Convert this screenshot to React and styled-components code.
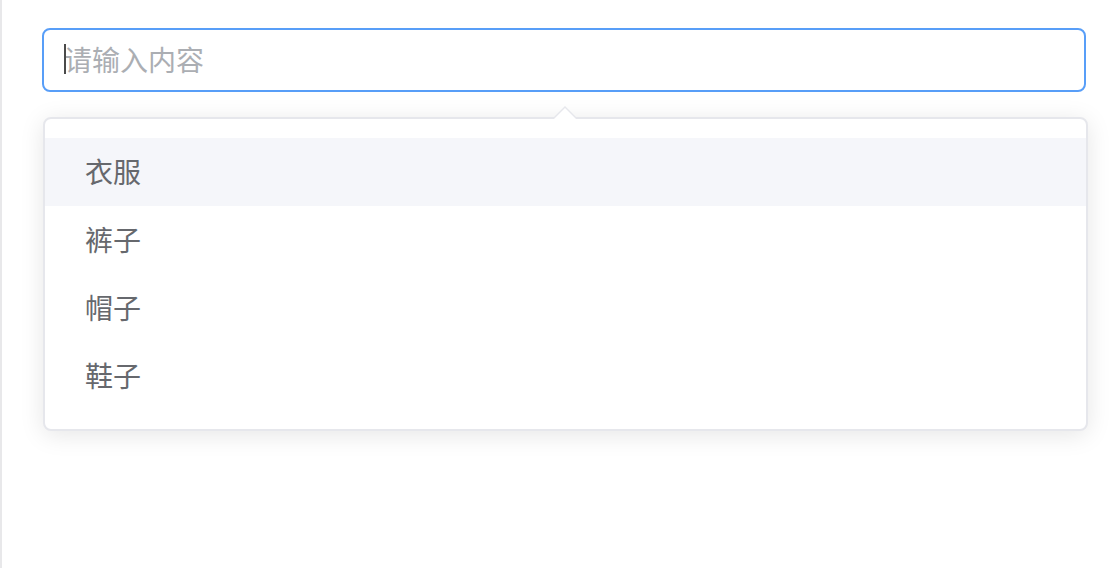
import React from "react";
import styled, { createGlobalStyle } from "styled-components";

const GlobalStyle = createGlobalStyle`
  html, body {
    margin: 0;
    padding: 0;
    background: #ffffff;
  }
  body {
    font-family: "Noto Sans CJK SC", "Noto Sans", sans-serif;
  }
`;

const Page = styled.div`
  box-sizing: border-box;
  height: 568px;
  border-left: 2px solid #e8e8ea;
  padding: 28px 20px 0 40px;
`;

const InputWrap = styled.div`
  position: relative;
  width: 1044px;
`;

const TextInput = styled.input`
  box-sizing: border-box;
  width: 100%;
  height: 64px;
  padding: 0 20px 3px;
  border: 2px solid #589ef8;
  border-radius: 8px;
  outline: none;
  background: #ffffff;
  font-family: "Noto Sans CJK SC", "Noto Sans", sans-serif;
  font-size: 28px;
  color: #606266;
  caret-color: transparent;

  &::placeholder {
    color: #abaeb3;
  }
`;

const Caret = styled.span`
  position: absolute;
  left: 22px;
  top: 16px;
  width: 2px;
  height: 30px;
  background: #4a4a4a;
`;

const Dropdown = styled.div`
  position: relative;
  box-sizing: border-box;
  width: 1045px;
  margin: 25px 0 0 1px;
  padding: 19px 0;
  border: 2px solid #e6e7ec;
  border-radius: 8px;
  background: #ffffff;
  box-shadow: 0 4px 24px rgba(0, 0, 0, 0.1);
`;

const Arrow = styled.div`
  position: absolute;
  top: -13px;
  left: 508px;
  width: 0;
  height: 0;
  border-left: 12px solid transparent;
  border-right: 12px solid transparent;
  border-bottom: 12px solid #e6e7ec;

  &::after {
    content: "";
    position: absolute;
    left: -11px;
    top: 2px;
    border-left: 11px solid transparent;
    border-right: 11px solid transparent;
    border-bottom: 11px solid #ffffff;
  }
`;

const List = styled.ul`
  list-style: none;
  margin: 0;
  padding: 0;
`;

const Item = styled.li`
  height: 66px;
  line-height: 66px;
  padding: 0 40px 2px;
  font-size: 28px;
  color: #66686d;
  background: ${(p) => (p.$active ? "#f5f6fa" : "transparent")};
  white-space: nowrap;
  cursor: pointer;
`;

const suggestions = ["衣服", "裤子", "帽子", "鞋子"];

export default function App() {
  return (
    <>
      <GlobalStyle />
      <Page>
        <InputWrap>
          <TextInput placeholder="请输入内容" readOnly />
          <Caret />
        </InputWrap>
        <Dropdown>
          <Arrow />
          <List>
            {suggestions.map((s, i) => (
              <Item key={s} $active={i === 0}>
                {s}
              </Item>
            ))}
          </List>
        </Dropdown>
      </Page>
    </>
  );
}
